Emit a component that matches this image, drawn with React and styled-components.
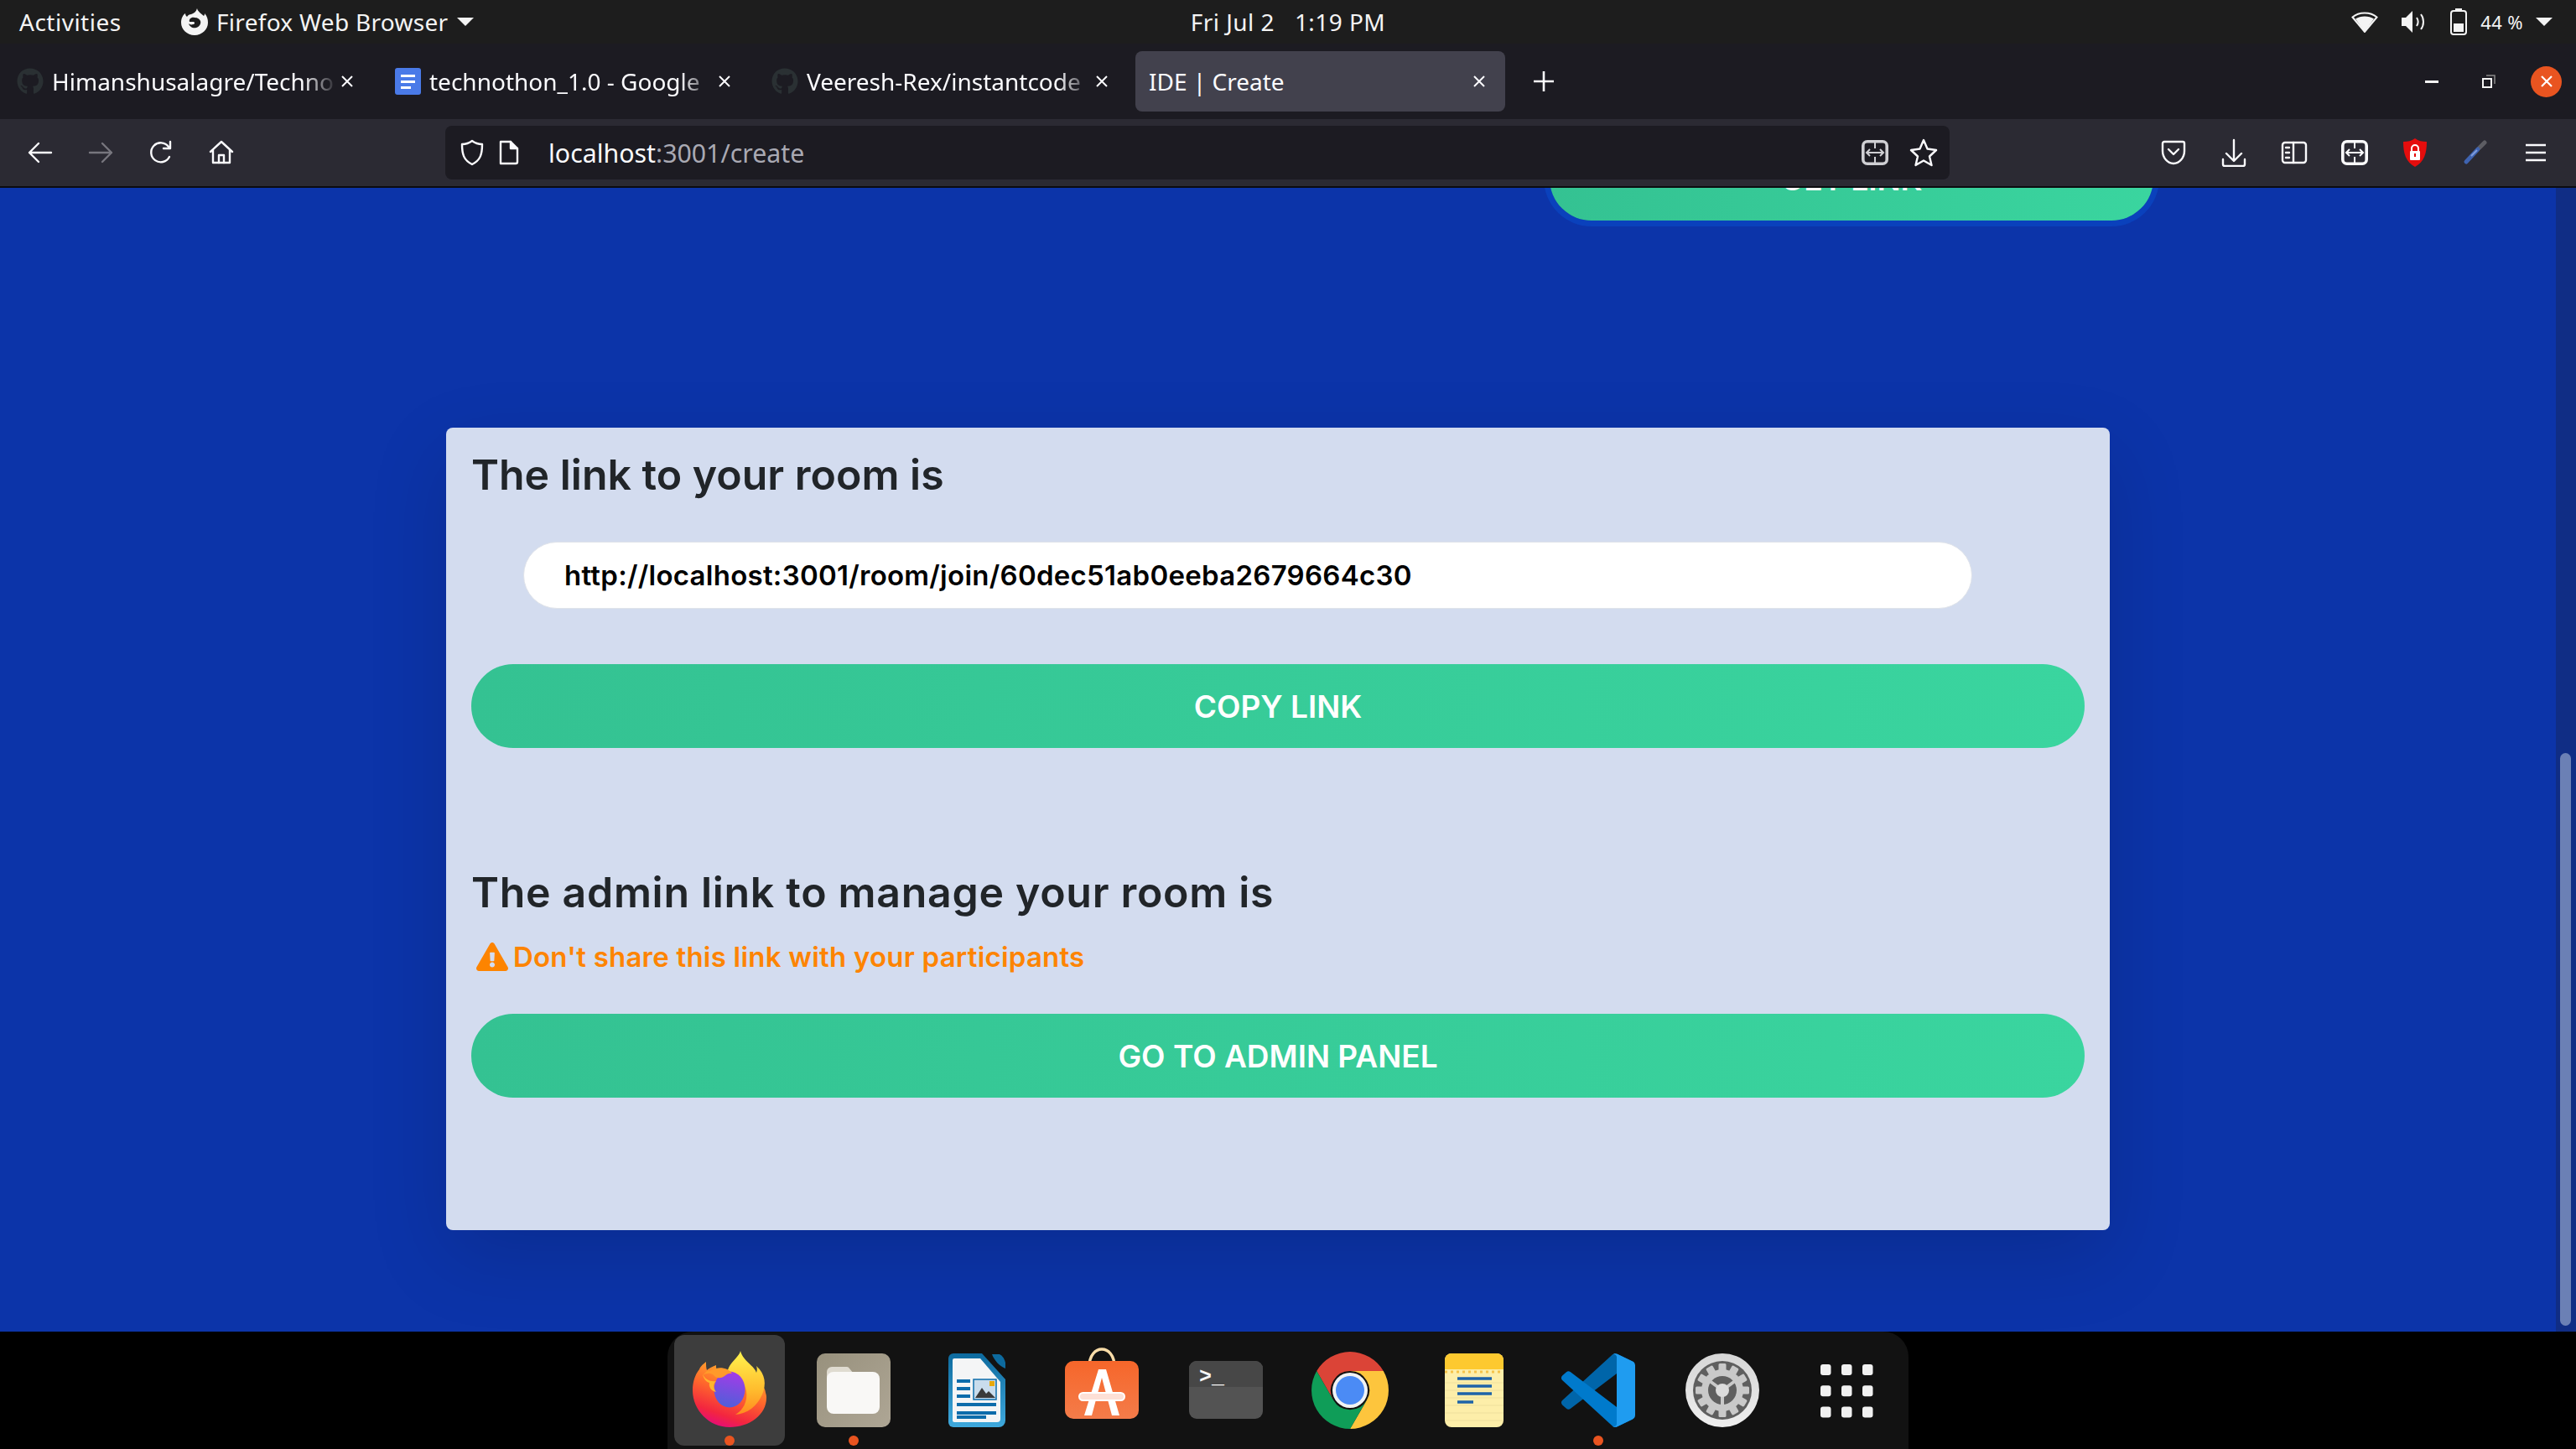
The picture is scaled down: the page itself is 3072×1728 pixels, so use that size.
import React from "react";
import styled, { createGlobalStyle } from "styled-components";
import { FaExclamationTriangle, FaGithub } from "react-icons/fa";

const UI = `"Noto Sans", "Open Sans", sans-serif`;
const PAGE = `Inter, "Open Sans", sans-serif`;

const Global = createGlobalStyle`
  html, body { margin: 0; padding: 0; background: #000; }
  body { width: 3072px; height: 1728px; overflow: hidden; font-family: ${UI}; }
  * { box-sizing: border-box; }
`;

const Screen = styled.div`
  width: 3072px; height: 1728px; display: flex; flex-direction: column; overflow: hidden;
`;

/* GNOME top bar */
const TopBar = styled.header`
  height: 52px; background: #1d1d1d; color: #f4f4f4; display: grid;
  grid-template-columns: 1fr auto 1fr; align-items: center; padding: 0 23px;
  font-size: 28px;
`;
const TopLeft = styled.div`display: flex; align-items: center;`;
const Activities = styled.span`width: 192px; letter-spacing: 0.5px;`;
const AppName = styled.span`margin-left: 9px; margin-right: 10px; letter-spacing: 0.3px;`;
const Caret = styled.span`
  width: 0; height: 0; border-left: 10px solid transparent; border-right: 10px solid transparent;
  border-top: 10px solid #f4f4f4;
`;
const Clock = styled.div`display: flex; gap: 24px; letter-spacing: 0.45px;`;
const TopRight = styled.div`
  display: flex; align-items: center; justify-content: flex-end; padding-right: 5px;
`;
const Percent = styled.span`font-size: 22px; margin: 0 15px 0 16px; letter-spacing: 0.4px;`;

/* Tabs */
const TabStrip = styled.div`
  height: 90px; background: #1c1b22; display: flex; align-items: center; padding-left: 4px; gap: 9px; color: #fbfbfe;
`;
const Tab = styled.div`
  width: 441px; height: 72px; border-radius: 8px; display: flex; align-items: center;
  padding: 0 16px; background: ${p => (p.$active ? "#42414d" : "transparent")};
`;
const TabIcon = styled.span`width: 32px; height: 32px; display: flex; margin-right: 10px; flex: none;`;
const TabTitle = styled.span`
  flex: 1; min-width: 0; white-space: nowrap; overflow: hidden; font-size: 28px;
  ${p => p.$fade && `mask-image: linear-gradient(to right, #000 88%, transparent 100%);`}
`;
const TabClose = styled.svg`width: 16px; height: 16px; margin: 0 7px 0 4px; flex: none;`;
const PlusButton = styled.svg`width: 26px; height: 26px; margin-left: 24px;`;
const WindowControls = styled.div`
  margin-left: auto; display: flex; align-items: center; height: 100%;
`;
const WinSlot = styled.div`width: 68px; display: flex; align-items: center; justify-content: center;`;
const CloseCircle = styled.div`
  width: 37px; height: 37px; border-radius: 50%; background: #e95420; display: flex;
  align-items: center; justify-content: center; margin-right: 17px; margin-left: 16px;
`;

/* Firefox toolbar */
const Toolbar = styled.div`
  height: 80px; background: #2b2a33; display: flex; align-items: center; padding: 0 12px; flex: none;
`;
const ToolSlot = styled.div`
  width: ${p => p.$w || 72}px; height: 64px; display: flex; align-items: center; justify-content: center; flex: none;
`;
const UrlBar = styled.div`
  flex: 1; height: 64px; margin: 0 231px; background: #1c1b22; border-radius: 8px;
  display: flex; align-items: center; padding: 0 2px 0 16px;
`;
const UrlText = styled.span`font-size: 30.3px; color: #fbfbfe; margin-left: 34px; flex: 1;`;
const UrlDim = styled.span`color: #a9a9b3;`;
const Divider = styled.div`height: 2px; background: #0c0c10; flex: none;`;

/* Page */
const Viewport = styled.main`
  flex: 1; min-height: 0; display: flex; background: #0c34a9; overflow: hidden;
`;
const Content = styled.div`width: 3048px; display: flex; flex-direction: column; flex: none;`;
const TopGetLink = styled.div`
  margin: -61px 0 0 1848px; width: 720px; height: 100px; border-radius: 50px; color: #fff;
  background: linear-gradient(to right, #34c292, #3ad59f); box-shadow: 0 0 0 7px #0a41bc;
  display: flex; align-items: center; justify-content: center;
  font: 600 37px ${PAGE}; flex: none;
`;
const Card = styled.section`
  margin: 247px 0 0 532px; width: 1984px; height: 957px; background: #d3dcef; border-radius: 8px;
  padding: 24px 30px 0; box-shadow: 0 32px 96px rgba(0,0,0,.14); flex: none;
`;
const Heading = styled.h2`
  margin: ${p => p.$top || 0}px 0 0; font: 600 50px/64px ${PAGE}; color: #212529;
  letter-spacing: ${p => p.$track}px;
`;
const LinkField = styled.div`
  margin: 48px 0 0 62px; width: 1728px; height: 80px; background: #fff; border-radius: 40px;
  border: 1px solid #dfe3ea; display: flex; align-items: center; padding-left: 48px;
  font: 600 33px ${PAGE}; color: #000; letter-spacing: 0.27px;
`;
const ActionButton = styled.div`
  margin-top: ${p => p.$top}px; width: 1924px; height: 100px; border-radius: 50px; color: #fff;
  background: linear-gradient(to right, #34c292, #3ad59f);
  display: flex; align-items: center; justify-content: center; font: 600 37px ${PAGE};
`;
const Warning = styled.div`
  margin-top: 23px; height: 44px; display: flex; align-items: center; color: #fd8400;
  font: 600 33px/44px ${PAGE}; padding-left: 6px; letter-spacing: 0.22px;
`;
const WarnIcon = styled(FaExclamationTriangle)`width: 38px; height: 34px; margin-right: 6px; flex: none;`;

const ScrollTrack = styled.div`
  width: 24px; flex: none; background: #102d85; display: flex; flex-direction: column;
  padding: 674px 6px 7px 5px;
`;
const ScrollThumb = styled.div`flex: 1; background: #6b80b5; border-radius: 7px;`;

/* Dock */
const DockWrap = styled.footer`
  height: 140px; background: #000; display: flex; justify-content: center; flex: none;
`;
const Dock = styled.nav`
  width: 1480px; padding: 4px 0 0 8px; background: #121212; border-radius: 30px 30px 0 0;
  display: flex; gap: 16px;
`;
const DockItem = styled.div`
  position: relative; width: 132px; height: 132px; border-radius: 12px;
  background: ${p => (p.$active ? "#3d3d3d" : "transparent")};
  display: flex; align-items: flex-start; justify-content: center; padding-top: ${p => p.$top}px; flex: none;
`;
const RunDot = styled.span`
  position: absolute; left: 60px; bottom: 0; width: 12px; height: 12px; border-radius: 50%; background: #e95420;
`;

const S = { fill: "none", stroke: "#fbfbfe", strokeWidth: 2.4, strokeLinecap: "round", strokeLinejoin: "round" };

const FirefoxGlyph = () => (
  <svg width="34" height="32" viewBox="0 0 34 32">
    <path fill="#f4f4f4" d="M20 0c1 4 5 6 8 9 1-1 1-2 1-3 3 3 4 7 4 11 0 8-7 15-16 15S1 25 1 17C1 12 3 8 6 6c0 2 1 3 2 4 1-2 3-3 5-3 3-1 6-3 7-7z" />
    <path fill="#1d1d1d" d="M17 11c-4-1-7 2-6 5h5c2 1 1 3-1 3-2 1-4 0-5-1 1 4 5 6 9 5 4-1 6-5 5-8-1-2-3-4-7-4z" />
  </svg>
);
const WifiIcon = () => (
  <svg width="32" height="26" viewBox="0 0 32 26" style={{ marginRight: 28 }}>
    <path d="M1.5 7.5C9 .8 23 .8 30.5 7.5L16 25z" fill="none" stroke="#f4f4f4" strokeWidth="2" />
    <path d="M5 9.5c6-4 16-4 22 0L16 25z" fill="#f4f4f4" />
  </svg>
);
const SpeakerIcon = () => (
  <svg width="30" height="26" viewBox="0 0 30 26" style={{ marginRight: 28 }}>
    <path d="M0 8h5l8-8v26l-8-8H0z" fill="#f4f4f4" />
    <path d="M18 8c2 3 2 7 0 10M23 4c4 5 4 13 0 18" fill="none" stroke="#f4f4f4" strokeWidth="2" />
  </svg>
);
const BatteryIcon = () => (
  <svg width="20" height="32" viewBox="0 0 20 32">
    <rect x="6" y="0" width="8" height="3" fill="#f4f4f4" />
    <rect x="1" y="3" width="18" height="28" rx="3" fill="none" stroke="#f4f4f4" strokeWidth="2" />
    <rect x="4" y="18" width="12" height="10" fill="#f4f4f4" />
  </svg>
);

const BackIcon = ({ dim }) => (
  <svg width="32" height="32" viewBox="0 0 32 32" {...S} stroke={dim ? "#77767e" : "#fbfbfe"}>
    {dim ? <path d="M3 16h26M18 5l11 11-11 11" /> : <path d="M29 16H3M14 5 3 16l11 11" />}
  </svg>
);
const ReloadIcon = () => (
  <svg width="32" height="32" viewBox="0 0 32 32" {...S}>
    <path d="M26 21a11.5 11.5 0 1 1-1-12" />
    <path d="M27 3v8h-8" />
  </svg>
);
const HomeIcon = () => (
  <svg width="32" height="32" viewBox="0 0 32 32" {...S}>
    <path d="M3 15 16 3l13 12M6 13v15h20V13" />
    <path d="M13 28V19h6v9" />
  </svg>
);
const ShieldIcon = () => (
  <svg width="32" height="32" viewBox="0 0 32 32" {...S}>
    <path d="M16 2c4 3 8 4 12 4 0 12-2 19-12 24C6 25 4 18 4 6c4 0 8-1 12-4z" />
  </svg>
);
const PageIcon = () => (
  <svg width="26" height="30" viewBox="0 0 26 30" {...S} style={{ marginLeft: 15 }}>
    <path d="M3 2h12l8 8v16a2 2 0 0 1-2 2H3z" />
    <path d="M15 2v8h8" fill="#fbfbfe" />
  </svg>
);
const TranslateIcon = ({ color = "#fbfbfe" }) => (
  <svg width="32" height="30" viewBox="0 0 32 30">
    <rect x="1.8" y="1.8" width="28.4" height="26.4" rx="5" fill="none" stroke={color} strokeWidth="3.6" />
    <path d="M16 2v8M16 20v8" stroke={color} strokeWidth="2" />
    <path d="M6 15h20M10 11l-4 4 4 4M22 11l4 4-4 4" fill="none" stroke={color} strokeWidth="2" />
  </svg>
);
const StarIcon = () => (
  <svg width="34" height="34" viewBox="0 0 34 34" {...S}>
    <path d="M17 2l4.5 10.5L32 14l-8 7.5L26.5 32 17 26.5 7.5 32 10 21.5 2 14l10.5-1.5z" />
  </svg>
);
const PocketIcon = () => (
  <svg width="30" height="30" viewBox="0 0 30 30" {...S}>
    <path d="M4 2h22a2 2 0 0 1 2 2v9c0 8-6 15-13 15S2 21 2 13V4a2 2 0 0 1 2-2z" />
    <path d="M9 11l6 6 6-6" />
  </svg>
);
const DownloadIcon = () => (
  <svg width="30" height="34" viewBox="0 0 30 34" {...S}>
    <path d="M15 2v24M6 18l9 9 9-9M2 25v6a2 2 0 0 0 2 2h22a2 2 0 0 0 2-2v-6" />
  </svg>
);
const SidebarIcon = () => (
  <svg width="32" height="30" viewBox="0 0 32 30" {...S}>
    <rect x="2" y="3" width="28" height="24" rx="3" />
    <path d="M15 3v24" />
    <path d="M6 9h4M6 15h4M6 21h4" />
  </svg>
);
const LockShield = () => (
  <svg width="30" height="34" viewBox="0 0 30 34">
    <path d="M15 0c4 3 9 4 14 4 0 14-3 24-14 30C4 28 1 18 1 4c5 0 10-1 14-4z" fill="#e50d0d" />
    <rect x="9" y="15" width="12" height="11" rx="1" fill="#fff" />
    <path d="M11 15v-3a4 4 0 0 1 8 0v3" fill="none" stroke="#fff" strokeWidth="2" />
    <rect x="14" y="18" width="2" height="4" fill="#e50d0d" />
  </svg>
);
const DropperIcon = () => (
  <svg width="30" height="30" viewBox="0 0 30 30">
    <path d="M20 9l6-6" stroke="#5d5d63" strokeWidth="5" strokeLinecap="round" />
    <path d="M4 26 18 11" stroke="#3f63b0" strokeWidth="5" strokeLinecap="round" />
    <path d="M10 19 17 12" stroke="#7f9cdc" strokeWidth="2" />
  </svg>
);
const MenuIcon = () => (
  <svg width="28" height="24" viewBox="0 0 28 24" stroke="#fbfbfe" strokeWidth="2.6">
    <path d="M2 3h24M2 12h24M2 21h24" />
  </svg>
);

const CloseX = ({ color = "#fbfbfe", w = 2 }) => (
  <TabClose viewBox="0 0 16 16">
    <path d="M2 2l12 12M14 2 2 14" stroke={color} strokeWidth={w} />
  </TabClose>
);

const DocsIcon = () => (
  <svg width="32" height="32" viewBox="0 0 32 32">
    <rect x="1" y="0" width="31" height="32" rx="3" fill="#4a7ae8" />
    <path d="M8 8h17v3H8zM8 15h17v3H8zM8 22h12v3H8z" fill="#fff" />
  </svg>
);

/* Dock icons */
const FirefoxApp = () => (
  <svg width="88" height="92" viewBox="0 0 88 92">
    <defs>
      <linearGradient id="ffBody" x1="0.7" y1="0" x2="0.3" y2="1">
        <stop offset="0" stopColor="#ffbd2e" />
        <stop offset="0.45" stopColor="#ff6a2b" />
        <stop offset="0.8" stopColor="#f3263f" />
        <stop offset="1" stopColor="#e4097f" />
      </linearGradient>
      <linearGradient id="ffFlame" x1="0.5" y1="0" x2="0.5" y2="1">
        <stop offset="0" stopColor="#fff44f" />
        <stop offset="0.6" stopColor="#ffbd2e" />
        <stop offset="1" stopColor="#ff8a1f" />
      </linearGradient>
      <linearGradient id="ffGlobe" x1="0.6" y1="0" x2="0.4" y2="1">
        <stop offset="0" stopColor="#a43be8" />
        <stop offset="1" stopColor="#4f5fd8" />
      </linearGradient>
    </defs>
    <path fill="url(#ffBody)" d="M44 91C20 91 0 71 0 47c0-10 3-19 8-25 1-3 3-5 8-9 0 4 0 7 1 10 2-2 6-4 11-6 0 3 0 5 2 7 8-2 18-1 26 3 9 5 30 8 31 23 1 3 1 4 1 6 0 20-20 35-44 35z" />
    <path fill="url(#ffFlame)" d="M57 0c-1 6-10 12-14 20-2 4-2 8-1 10 10 0 20 7 22 18 2 12-4 23-13 28 14-1 26-10 32-24 5-12 4-24-7-34 1 3 1 5 0 8C74 18 60 12 57 0z" />
    <ellipse cx="44" cy="46" rx="18.5" ry="21.5" fill="url(#ffGlobe)" />
    <path fill="#ff9a2a" d="M12 29c6-4 12-2 14 1 3 3 8 3 12 0 3-3 7-4 9-3-3-5-12-8-19-6-4 1-7 4-10 2z" />
    <path fill="#ffb52e" d="M12 28c3 6 9 9 16 8-4 4-3 9 0 13-5-1-9-5-8-11-4-1-7-5-8-10z" />
  </svg>
);
const FilesApp = () => (
  <svg width="88" height="88" viewBox="0 0 88 88">
    <defs>
      <linearGradient id="fTile" x1="0" y1="0" x2="1" y2="1">
        <stop offset="0" stopColor="#98917d" />
        <stop offset="1" stopColor="#aea695" />
      </linearGradient>
    </defs>
    <rect width="88" height="88" rx="10" fill="url(#fTile)" />
    <path d="M12 30v-8a6 6 0 0 1 6-6h18a4 4 0 0 1 3 2l5 6z" fill="#dfdbd0" />
    <rect x="12" y="22" width="63" height="50" rx="8" fill="#f9f8f6" />
  </svg>
);
const WriterApp = () => (
  <svg width="70" height="88" viewBox="0 0 70 88">
    <defs>
      <linearGradient id="wBlue" x1="0" y1="0" x2="0" y2="1">
        <stop offset="0" stopColor="#0d6a9e" />
        <stop offset="1" stopColor="#3fa9dd" />
      </linearGradient>
    </defs>
    <path d="M52 0h9c4 2 6 6 7 10v7c-7-3-13-9-16-17z" fill="#0d6a9e" transform="translate(0 1)" />
    <path d="M6 0h34l28 31v49a8 8 0 0 1-8 8H6a6 6 0 0 1-6-6V6a6 6 0 0 1 6-6z" fill="url(#wBlue)" />
    <path d="M7 6h31l24 28v44a4 4 0 0 1-4 4H7a2 2 0 0 1-2-2V8a2 2 0 0 1 2-2z" fill="#f4f5f6" />
    <path d="M10 32h16v4H10zM10 41h16v4H10zM10 50h16v4H10zM10 60h47v4H10zM10 70h47v4H10zM10 79h35v-4H10z" fill="#0d6cab" transform="translate(0 -1)" />
    <rect x="30" y="31" width="27" height="24" fill="#c9dcec" stroke="#0d6cab" strokeWidth="1.5" />
    <path d="M32 53l8-12 5 7 3-3 8 8z" fill="#3a3a3a" />
    <rect x="49" y="33" width="6" height="6" fill="#e8a80c" />
  </svg>
);
const SoftwareApp = () => (
  <svg width="88" height="92" viewBox="0 0 88 92" style={{ overflow: "visible" }}>
    <defs>
      <linearGradient id="sBag" x1="0" y1="0" x2="0" y2="1">
        <stop offset="0" stopColor="#f6662a" />
        <stop offset="1" stopColor="#f47c4a" />
      </linearGradient>
    </defs>
    <path d="M29 20C29-8 59-8 59 20" fill="none" stroke="#f8dca8" strokeWidth="3.5" transform="translate(0 -1)" />
    <rect y="12" width="88" height="69" rx="10" fill="url(#sBag)" />
    <path d="M40 22h9l16 55h-9L44 32 32 77h-9z" fill="#fff" />
    <rect x="17" y="50" width="54" height="9" rx="4.5" fill="#fde0d6" stroke="#fff" strokeWidth="2" />
  </svg>
);
const TerminalApp = () => (
  <svg width="88" height="92" viewBox="0 0 88 92">
    <rect y="12" width="88" height="69" rx="9" fill="#535353" />
    <path d="M0 43V21a9 9 0 0 1 9-9h70a9 9 0 0 1 9 9v22z" fill="#474747" />
    <text x="12" y="38" fill="#f5f5f5" fontFamily="Liberation Mono, monospace" fontWeight="700" fontSize="25">&gt;_</text>
  </svg>
);
const ChromeApp = () => (
  <svg width="92" height="92" viewBox="0 0 92 92">
    <path d="M6.2 23A46 46 0 0 1 85.8 23L46 23A23 23 0 0 0 26 57.5z" fill="#db4437" />
    <path d="M85.8 23A46 46 0 0 1 46 92L66 57.5A23 23 0 0 0 46 23z" fill="#fdc53d" />
    <path d="M46 92A46 46 0 0 1 6.2 23L26 57.5A23 23 0 0 0 66 57.5z" fill="#0f9d58" />
    <circle cx="46" cy="46" r="21" fill="#f1f3f4" />
    <circle cx="46" cy="46" r="17" fill="#4b8bf5" />
  </svg>
);
const NotesApp = () => (
  <svg width="70" height="88" viewBox="0 0 70 88">
    <defs>
      <clipPath id="nClip"><rect width="70" height="88" rx="8" /></clipPath>
    </defs>
    <g clipPath="url(#nClip)">
      <rect width="70" height="88" fill="#fdeea9" />
      <rect width="70" height="19" fill="#fdc92f" />
      <path d="M0 22h70" stroke="#f5c34a" strokeWidth="3" strokeDasharray="3 4" />
      <path d="M0 35h70M0 44h70M0 53h70M0 62h70M0 71h70M0 80h70" stroke="#efdf9d" strokeWidth="1.2" />
      <path d="M15 30h41M15 39h41M15 48h41M15 58h19" stroke="#1e63a8" strokeWidth="3.4" />
    </g>
  </svg>
);
const VsCodeApp = () => (
  <svg width="88" height="88" viewBox="0 0 100 100">
    <path fill="#0065A9" d="M96.4614 10.7962L75.8569 0.875542C73.4719 -0.272773 70.6217 0.211611 68.75 2.08333L1.29858 63.5832C-0.515693 65.2373 -0.513607 68.0937 1.30308 69.7452L6.81272 74.754C8.29793 76.1042 10.5347 76.2036 12.1338 74.9905L93.3609 13.3699C96.086 11.3026 100 13.2462 100 16.6667V16.4275C100 14.0265 98.6246 11.8378 96.4614 10.7962Z" />
    <path fill="#007ACC" d="M96.4614 89.2038L75.8569 99.1245C73.4719 100.273 70.6217 99.7884 68.75 97.9167L1.29858 36.4168C-0.515693 34.7627 -0.513607 31.9063 1.30308 30.2548L6.81272 25.246C8.29793 23.8958 10.5347 23.7964 12.1338 25.0095L93.3609 86.6301C96.086 88.6974 100 86.7538 100 83.3333V83.5725C100 85.9735 98.6246 88.1622 96.4614 89.2038Z" />
    <path fill="#1F9CF0" d="M75.8578 99.1263C73.4721 100.274 70.6219 99.7885 68.75 97.9166C71.0564 100.223 75 98.5895 75 95.3278V4.67213C75 1.41039 71.0564 -0.223106 68.75 2.08329C70.6219 0.211402 73.4721 -0.273666 75.8578 0.873633L96.4587 10.7807C98.6234 11.8217 100 14.0112 100 16.4132V83.5871C100 85.9891 98.6234 88.1786 96.4586 89.2196L75.8578 99.1263Z" />
  </svg>
);
const gearTeeth = Array.from({ length: 12 }, (_, i) => i * 30);
const SettingsApp = () => (
  <svg width="88" height="88" viewBox="0 0 88 88">
    <defs>
      <linearGradient id="sRing" x1="0" y1="0" x2="0" y2="1">
        <stop offset="0" stopColor="#d6d6d6" />
        <stop offset="1" stopColor="#efefef" />
      </linearGradient>
    </defs>
    <circle cx="44" cy="44" r="44" fill="url(#sRing)" />
    <circle cx="44" cy="44" r="35" fill="#5f5f5f" />
    {gearTeeth.map(a => (
      <rect key={a} x="39.5" y="12" width="9" height="10" rx="1.5" fill="#c9c9c9" transform={`rotate(${a} 44 44)`} />
    ))}
    <circle cx="44" cy="44" r="25" fill="#c9c9c9" />
    <circle cx="44" cy="44" r="17" fill="#5f5f5f" />
    <path d="M44 44 29 33M44 44 59 33M44 44v18" stroke="#c9c9c9" strokeWidth="4" />
    <circle cx="44" cy="44" r="8" fill="#dcdcdc" />
  </svg>
);
const gridCells = [0, 1, 2].flatMap(r => [0, 1, 2].map(c => [c, r]));
const AppsGrid = () => (
  <svg width="88" height="88" viewBox="0 0 88 88">
    {gridCells.map(([c, r]) => (
      <rect key={`${c}${r}`} x={13 + c * 25} y={13 + r * 25.3} width="12.5" height="13" rx="3" fill="#f1f1f1" />
    ))}
  </svg>
);

const dockApps = [
  { C: FirefoxApp, active: true, dot: true, top: 19 },
  { C: FilesApp, dot: true, top: 22 },
  { C: WriterApp, top: 22 },
  { C: SoftwareApp, top: 19 },
  { C: TerminalApp, top: 19 },
  { C: ChromeApp, top: 20 },
  { C: NotesApp, top: 22 },
  { C: VsCodeApp, dot: true, top: 22 },
  { C: SettingsApp, top: 22 },
  { C: AppsGrid, top: 22 },
];

const GitIcon = () => <FaGithub size={32} color="#2a3033" />;

export default function App() {
  return (
    <Screen>
      <Global />
      <TopBar>
        <TopLeft>
          <Activities>Activities</Activities>
          <FirefoxGlyph />
          <AppName>Firefox Web Browser</AppName>
          <Caret />
        </TopLeft>
        <Clock>
          <span>Fri Jul 2</span>
          <span>1:19 PM</span>
        </Clock>
        <TopRight>
          <WifiIcon />
          <SpeakerIcon />
          <BatteryIcon />
          <Percent>44 %</Percent>
          <Caret />
        </TopRight>
      </TopBar>

      <TabStrip>
        <Tab>
          <TabIcon><GitIcon /></TabIcon>
          <TabTitle $fade>Himanshusalagre/Techno</TabTitle>
          <CloseX />
        </Tab>
        <Tab>
          <TabIcon><DocsIcon /></TabIcon>
          <TabTitle $fade>technothon_1.0 - Google</TabTitle>
          <CloseX />
        </Tab>
        <Tab>
          <TabIcon><GitIcon /></TabIcon>
          <TabTitle $fade>Veeresh-Rex/instantcode</TabTitle>
          <CloseX />
        </Tab>
        <Tab $active>
          <TabTitle>IDE | Create</TabTitle>
          <CloseX />
        </Tab>
        <PlusButton viewBox="0 0 26 26">
          <path d="M13 1v24M1 13h24" stroke="#fbfbfe" strokeWidth="2.6" />
        </PlusButton>
        <WindowControls>
          <WinSlot>
            <svg width="16" height="4" viewBox="0 0 16 4"><rect width="16" height="3" y="1" fill="#f4f4f4" /></svg>
          </WinSlot>
          <WinSlot>
            <svg width="16" height="16" viewBox="0 0 16 16" fill="none" stroke="#f4f4f4">
              <rect x="1" y="5" width="10" height="10" strokeWidth="2" />
              <path d="M5 1h10v10" stroke="#8a8a8a" strokeWidth="1.5" />
            </svg>
          </WinSlot>
          <CloseCircle>
            <svg width="16" height="16" viewBox="0 0 16 16">
              <path d="M2 2l12 12M14 2 2 14" stroke="#fff" strokeWidth="2.2" />
            </svg>
          </CloseCircle>
        </WindowControls>
      </TabStrip>

      <Toolbar>
        <ToolSlot><BackIcon /></ToolSlot>
        <ToolSlot><BackIcon dim /></ToolSlot>
        <ToolSlot><ReloadIcon /></ToolSlot>
        <ToolSlot><HomeIcon /></ToolSlot>
        <UrlBar>
          <ShieldIcon />
          <PageIcon />
          <UrlText>localhost<UrlDim>:3001/create</UrlDim></UrlText>
          <ToolSlot $w={58}><TranslateIcon color="#cfcfd3" /></ToolSlot>
          <ToolSlot $w={58}><StarIcon /></ToolSlot>
        </UrlBar>
        <ToolSlot><PocketIcon /></ToolSlot>
        <ToolSlot><DownloadIcon /></ToolSlot>
        <ToolSlot><SidebarIcon /></ToolSlot>
        <ToolSlot><TranslateIcon /></ToolSlot>
        <ToolSlot><LockShield /></ToolSlot>
        <ToolSlot><DropperIcon /></ToolSlot>
        <ToolSlot><MenuIcon /></ToolSlot>
      </Toolbar>
      <Divider />

      <Viewport>
        <Content>
          <TopGetLink>GET LINK</TopGetLink>
          <Card>
            <Heading $track={0}>The link to your room is</Heading>
            <LinkField>http://localhost:3001/room/join/60dec51ab0eeba2679664c30</LinkField>
            <ActionButton $top={66}>COPY LINK</ActionButton>
            <Heading $top={140} $track={0.7}>The admin link to manage your room is</Heading>
            <Warning>
              <WarnIcon />
              Don't share this link with your participants
            </Warning>
            <ActionButton $top={46}>GO TO ADMIN PANEL</ActionButton>
          </Card>
        </Content>
        <ScrollTrack>
          <ScrollThumb />
        </ScrollTrack>
      </Viewport>

      <DockWrap>
        <Dock>
          {dockApps.map(({ C, active, dot, top }, i) => (
            <DockItem key={i} $active={active} $top={top}>
              <C />
              {dot && <RunDot />}
            </DockItem>
          ))}
        </Dock>
      </DockWrap>
    </Screen>
  );
}
